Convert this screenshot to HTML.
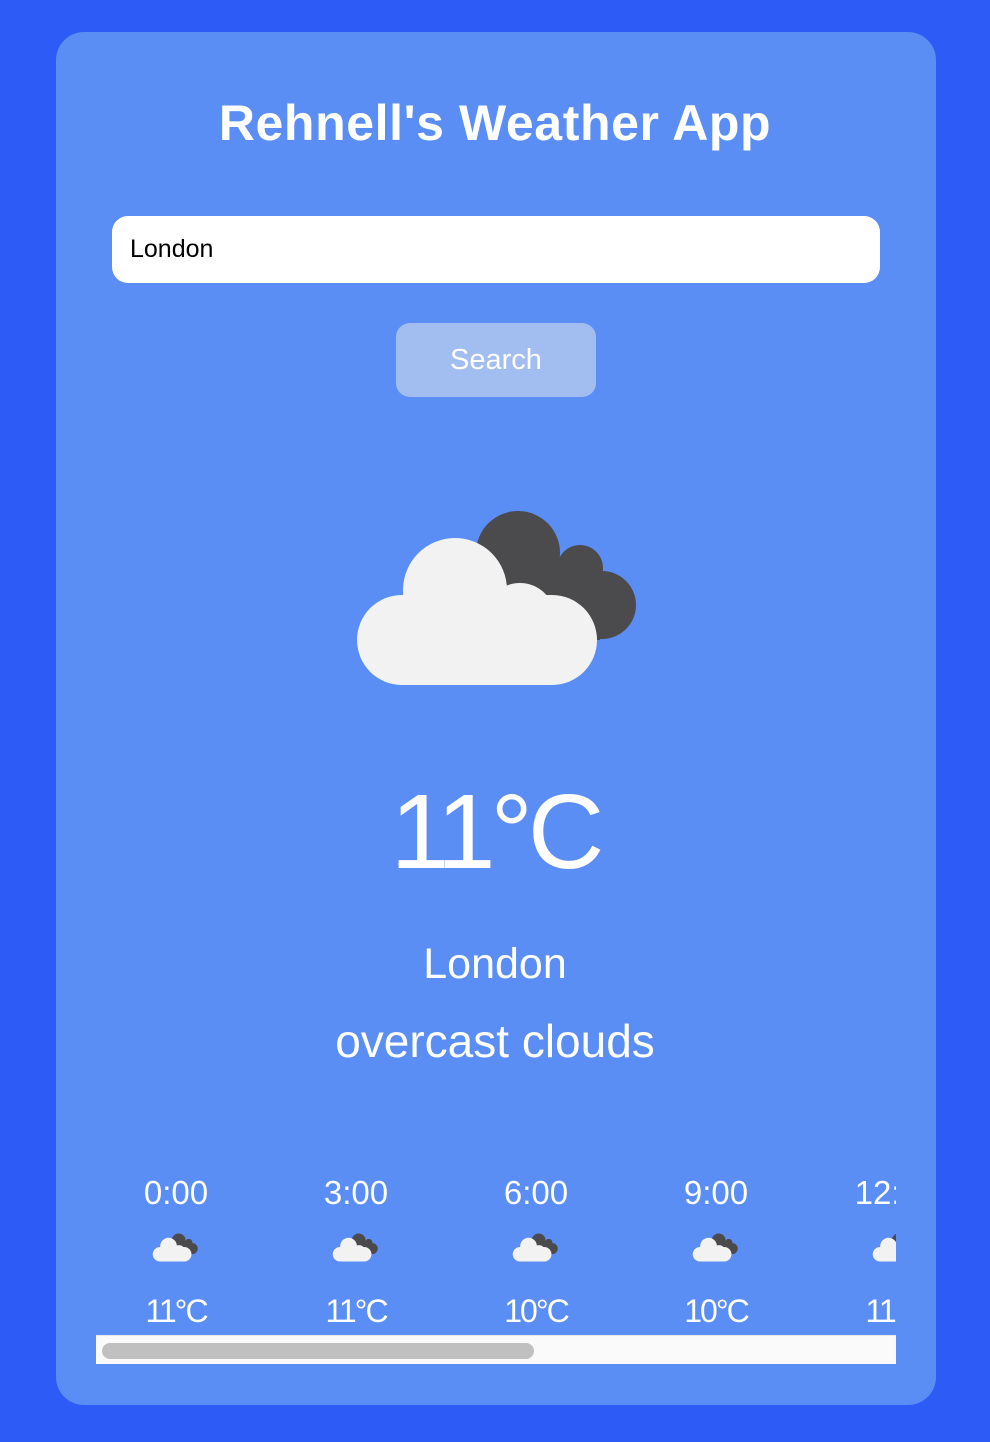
<!DOCTYPE html>
<html><head><style>
*{margin:0;padding:0;box-sizing:border-box}
body{width:990px;height:1442px;background:#2c5bf6;font-family:"Liberation Sans",sans-serif;position:relative;overflow:hidden;color:#fff}
.card{position:absolute;left:56px;top:32px;width:880px;height:1373px;background:#5b8ef4;border-radius:28px}
h1{position:absolute;top:94px;left:0;width:990px;text-align:center;font-size:50px;font-weight:bold;letter-spacing:0.6px}
.inp{position:absolute;left:112px;top:216px;width:768px;height:67px;background:#fff;border-radius:16px;color:#000;font-size:25px;padding:19px 18px;}
.btn{position:absolute;left:396px;top:323px;width:200px;height:74px;background:#a2bdf0;border-radius:14px;font-size:29px;text-align:center;line-height:74px}
.t{position:absolute;left:0;width:990px;text-align:center}
.fc{position:absolute;left:96px;top:1160px;width:800px;height:175px;overflow:hidden}
.col{position:absolute;top:0;width:180px;text-align:center}
.col .h{font-size:33px;margin-top:14px}
.col .v{font-size:32px;position:absolute;top:133px;width:180px;letter-spacing:-2px}
.col svg{position:absolute;left:64px;top:70px}
.sb{position:absolute;left:96px;top:1335px;width:800px;height:29px;background:#fafafa;border-top:1px solid #e8e8e8}
.th{position:absolute;left:6px;top:7px;width:432px;height:16px;background:#c0c0c0;border-radius:8px}
</style></head><body>
<svg width="0" height="0" style="position:absolute"><defs><g id="cl">
<g fill="#4b4a4c"><circle cx="518" cy="553" r="42"/><circle cx="580" cy="568" r="23"/><circle cx="602" cy="605" r="34"/><rect x="500" y="560" width="100" height="80"/></g>
<g fill="#f2f2f2"><circle cx="455" cy="590" r="52"/><circle cx="520" cy="618" r="35"/><rect x="357" y="595" width="240" height="90" rx="45"/></g>
</g></defs></svg>
<div class="card"></div>
<h1>Rehnell's Weather App</h1>
<div class="inp">London</div>
<div class="btn">Search</div>
<svg style="position:absolute;left:340px;top:490px" width="310" height="210" viewBox="340 490 310 210"><use href="#cl"/></svg>
<div class="t" style="top:772px;font-size:106px;letter-spacing:-5px">11°C</div>
<div class="t" style="top:940px;font-size:43px">London</div>
<div class="t" style="top:1014px;font-size:46px">overcast clouds</div>
<div class="fc">
<div class="col" style="left:-10px"><div class="h">0:00</div><svg width="50" height="34" viewBox="340 490 310 210"><use href="#cl"/></svg><div class="v">11°C</div></div>
<div class="col" style="left:170px"><div class="h">3:00</div><svg width="50" height="34" viewBox="340 490 310 210"><use href="#cl"/></svg><div class="v">11°C</div></div>
<div class="col" style="left:350px"><div class="h">6:00</div><svg width="50" height="34" viewBox="340 490 310 210"><use href="#cl"/></svg><div class="v">10°C</div></div>
<div class="col" style="left:530px"><div class="h">9:00</div><svg width="50" height="34" viewBox="340 490 310 210"><use href="#cl"/></svg><div class="v">10°C</div></div>
<div class="col" style="left:710px"><div class="h">12:00</div><svg width="50" height="34" viewBox="340 490 310 210"><use href="#cl"/></svg><div class="v">11°C</div></div>
</div>
<div class="sb"><div class="th"></div></div>
</body></html>
